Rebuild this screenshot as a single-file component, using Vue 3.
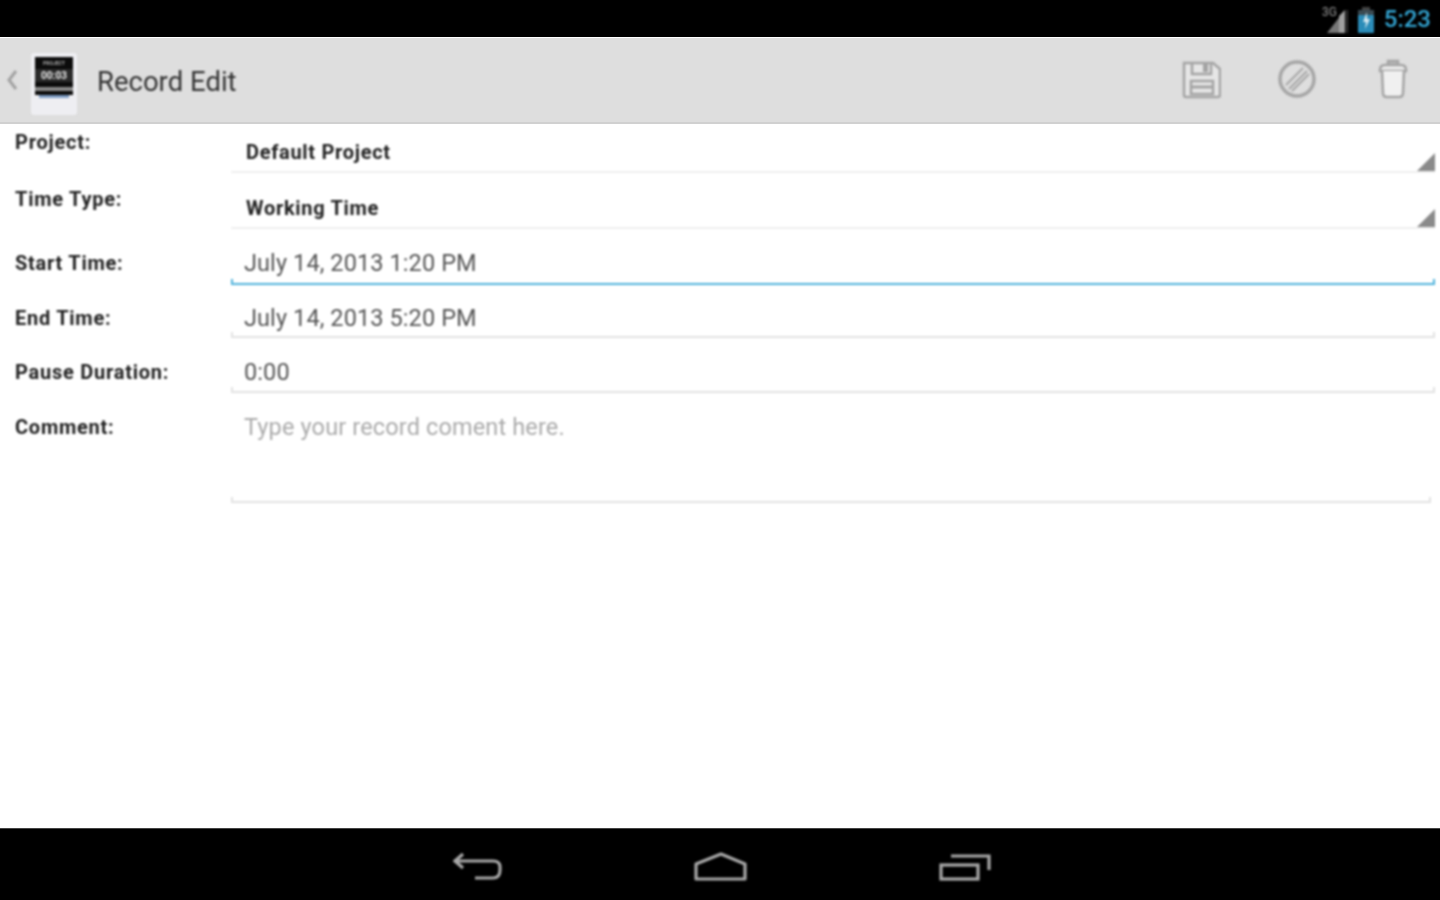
<script setup>
const rows = [
  { label: 'Project:', value: 'Default Project', kind: 'spinner', cls: 'r1' },
  { label: 'Time Type:', value: 'Working Time', kind: 'spinner', cls: 'r2' },
  { label: 'Start Time:', value: 'July 14, 2013 1:20 PM', kind: 'edit focused', cls: 'r3' },
  { label: 'End Time:', value: 'July 14, 2013 5:20 PM', kind: 'edit', cls: 'r4' },
  { label: 'Pause Duration:', value: '0:00', kind: 'edit', cls: 'r5' },
  { label: 'Comment:', value: 'Type your record coment here.', kind: 'edit hint', cls: 'r6' },
]
</script>

<template>
  <div class="screen">
    <header class="status">
      <span class="net">3G</span>
      <svg class="signal" width="24" height="26" viewBox="0 0 24 26">
        <path d="M20 2V25H2Z" fill="#777" />
        <path d="M20 2V25H14V8Z" fill="#a0a0a0" />
        <rect x="21" y="2" width="2" height="23" fill="#333" />
      </svg>
      <svg class="battery" width="18" height="26" viewBox="0 0 18 26">
        <rect x="5" y="0" width="8" height="4" fill="#444" />
        <rect x="1" y="3" width="16" height="6" fill="#3a4a52" />
        <rect x="1" y="8" width="16" height="18" rx="1" fill="#2b8cb8" />
        <path d="M10 5 6 15h3l-1 7 5-10h-3z" fill="#d5e8f0" />
      </svg>
      <span class="clock">5:23</span>
    </header>

    <div class="actionbar">
      <svg class="chev" width="12" height="24" viewBox="0 0 12 24">
        <path d="M10 3 3 12l7 9" fill="none" stroke="#a2a2a2" stroke-width="3" />
      </svg>
      <div class="logo">
        <div class="lcd">
          <span class="lcd-top">PROJECT</span>
          <span class="lcd-time">00:03</span>
          <span class="lcd-bar"></span>
        </div>
        <div class="lcd-foot"></div>
      </div>
      <span class="title">Record Edit</span>
      <div class="actions">
        <svg width="40" height="40" viewBox="0 0 40 40" fill="none" stroke="#a4a4a4" stroke-width="2.5">
          <path d="M3 4H32L39 10V36Q39 38 37 38H5Q3 38 3 36Z" fill="#e6e6e6" />
          <path d="M11 4V15H30V4" />
          <rect x="22" y="5" width="5" height="8" fill="#a4a4a4" stroke="none" />
          <rect x="10" y="22" width="22" height="13" />
          <path d="M10 28H32" stroke-width="3" />
        </svg>
        <svg width="40" height="40" viewBox="0 0 40 40" fill="none" stroke="#a6a6a6" stroke-width="2">
          <circle cx="20" cy="20" r="17" stroke-width="3.5" />
          <path d="M9 26 26 9M12 30 30 12M15 32 32 15" />
        </svg>
        <svg width="32" height="40" viewBox="0 0 32 40" fill="none" stroke="#a4a4a4" stroke-width="2.5">
          <path d="M11 5V2H21V5" stroke-width="2.5" fill="#bbb" />
          <path d="M3 11Q3 6 8 6H24Q29 6 29 11V12H3Z" fill="#ececec" />
          <path d="M5 12 6 34Q6 38 10 38H22Q26 38 26 34L27 12" fill="#f0f0f0" />
        </svg>
      </div>
    </div>

    <main class="form">
      <div v-for="row in rows" :key="row.label" class="row" :class="row.cls">
        <span class="label">{{ row.label }}</span>
        <div class="field" :class="row.kind">
          <span class="value">{{ row.value }}</span>
          <svg v-if="row.kind === 'spinner'" class="caret" width="18" height="18" viewBox="0 0 18 18">
            <path d="M18 0V18H0Z" fill="#8a8a8a" />
          </svg>
        </div>
      </div>
    </main>

    <nav class="navbar">
      <svg width="50" height="30" viewBox="0 0 50 30" fill="none" stroke="#a8a8a8" stroke-width="3.2">
        <path d="M10 2 2 9l8 7" />
        <path d="M3 9H40Q47 9 47 15V18Q47 26 40 26H22" />
      </svg>
      <svg width="56" height="30" viewBox="0 0 56 30" fill="none" stroke="#a8a8a8" stroke-width="3.2">
        <path d="M28 2 52 12V27H3V12Z" stroke-linejoin="round" />
      </svg>
      <svg width="52" height="30" viewBox="0 0 52 30" fill="none" stroke="#a8a8a8" stroke-width="3.2">
        <rect x="2" y="13" width="37" height="14" />
        <path d="M12 4H50V18" />
      </svg>
    </nav>
  </div>
</template>

<style>
html, body { margin: 0; background: #fff; }
</style>

<style scoped>
.screen {
  width: 1440px;
  height: 900px;
  display: flex;
  flex-direction: column;
  overflow: hidden;
  font-family: Roboto, "Liberation Sans", sans-serif;
  background: #fff;
}
.status > *, .actionbar > *, .form, .navbar svg { filter: blur(0.8px); }
.status {
  height: 37px;
  flex: none;
  background: #000;
  display: flex;
  align-items: center;
  justify-content: flex-end;
  padding-right: 9px;
  position: relative;
}
.signal { margin-right: 8px; margin-top: 5px; }
.net {
  position: absolute;
  right: 103px;
  top: 5px;
  font-size: 12px;
  color: #999;
}
.battery { margin-right: 9px; margin-top: 2px; }
.clock { font-size: 24px; font-weight: 500; color: #33a5d3; line-height: 1; letter-spacing: 0; }
.actionbar {
  height: 86px;
  flex: none;
  background: #dedede;
  border-bottom: 2px solid #d0d0d0;
  box-sizing: border-box;
  display: flex;
  align-items: center;
  position: relative;
  margin-top: 1px;
}
.chev { margin-left: 6px; }
.logo {
  position: absolute;
  left: 31px;
  top: 15px;
  width: 46px;
  height: 62px;
  background: #eeeef2;
  border-radius: 3px;
  display: flex;
  flex-direction: column;
  align-items: center;
  padding-top: 4px;
  box-sizing: border-box;
}
.lcd {
  width: 38px;
  height: 38px;
  background: #0c0c0c;
  display: flex;
  flex-direction: column;
  align-items: center;
  overflow: hidden;
}
.lcd-top { font-size: 5px; line-height: 12px; color: #aaa; font-weight: 700; }
.lcd-time {
  font-size: 10px;
  line-height: 13px;
  font-weight: 700;
  color: #e8e8e8;
  background: #2a2a2a;
  width: 100%;
  text-align: center;
}
.lcd-bar { width: 100%; height: 4px; margin-top: 5px; background: #888; }
.lcd-foot { width: 30px; height: 3px; background: #7d9cc4; }
.title {
  position: absolute;
  left: 97px;
  top: 28px;
  font-size: 27.5px;
  line-height: 32px;
  color: #333;
}
.actions {
  position: absolute;
  left: 1181px;
  top: 21px;
  display: grid;
  grid-template-columns: 96px 100px 32px;
  align-items: center;
}
.form { flex: 1; min-height: 0; }
.row { display: flex; box-sizing: border-box; }
.r1 { height: 49px; }
.r2 { height: 56px; }
.r3 { height: 56px; }
.r4 { height: 53px; }
.r5 { height: 55px; }
.r6 { height: 110px; }
.label {
  width: 231px;
  flex: none;
  padding-left: 15px;
  box-sizing: border-box;
  font-size: 20px;
  font-weight: 700;
  letter-spacing: 0.75px;
  line-height: 24px;
  color: #222;
}
.r1 .label { padding-top: 6px; }
.r2 .label { padding-top: 14px; }
.r3 .label { padding-top: 22px; }
.r4 .label { padding-top: 21px; }
.r5 .label { padding-top: 22px; }
.r6 .label { padding-top: 22px; }
.field {
  width: 1204px;
  flex: none;
  box-sizing: border-box;
  padding-left: 13px;
  border-bottom: 2px solid #e2e2e2;
  position: relative;
}
.r6 .field { width: 1200px; }
.field.spinner { padding-left: 15px; border-bottom-color: #efefef; }
.field.focused { border-bottom-color: #4fb2dc; }
.field.edit::before,
.field.edit::after {
  content: "";
  position: absolute;
  bottom: 0;
  width: 2px;
  height: 4px;
  background: #e2e2e2;
}
.field.edit::before { left: 0; }
.field.edit::after { right: 0; }
.field.focused::before, .field.focused::after { background: #4fb2dc; }
.value { display: block; font-size: 23.5px; letter-spacing: 0.1px; line-height: 28px; color: #555; }
.spinner .value { font-size: 20px; font-weight: 700; letter-spacing: 0.7px; line-height: 24px; color: #222; }
.r1 .value { padding-top: 16px; }
.r2 .value { padding-top: 23px; }
.r3 .value { padding-top: 20px; }
.r4 .value { padding-top: 19px; }
.r5 .value { padding-top: 20px; }
.r6 .value { padding-top: 20px; }
.hint .value { color: #aaa; letter-spacing: 0.14px; }
.caret { position: absolute; right: 0; bottom: 0; }
.navbar {
  height: 72px;
  flex: none;
  background: #000;
  border-top: 1px solid #444;
  box-sizing: border-box;
  display: flex;
  align-items: center;
  justify-content: center;
  gap: 190px;
  padding-top: 4px;
  padding-left: 4px;
}
</style>
